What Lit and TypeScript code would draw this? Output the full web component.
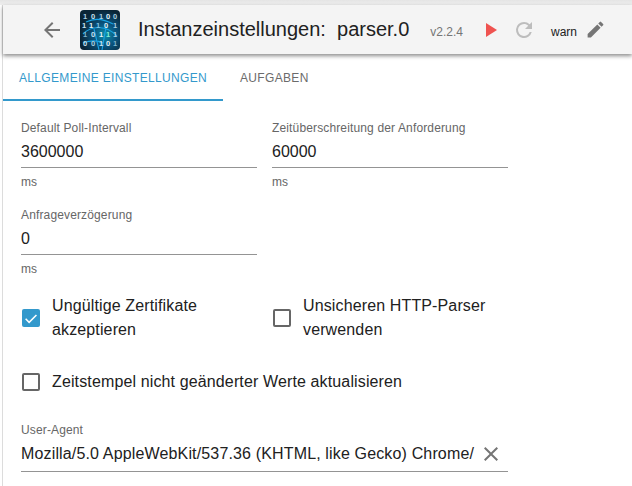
import {customElement} from "lit/decorators.js";
import {css, html, LitElement, svg} from "lit";

// rows of the binary pattern in the logo: x, y, digit, colour
const digits: [number, number, string, string][] = [
    [3, 9, "1", "#a9cfe0"], [11, 9, "0", "#c8e2ee"], [19, 9, "1", "#a9cfe0"], [26, 9, "0", "#e2f2f8"], [33, 9, "0", "#a9cfe0"],
    [2, 18, "1", "#c8e2ee"], [9, 18, "1", "#e2f2f8"], [16, 18, "1", "#7fc4e4"], [24, 18, "0", "#e2f2f8"], [33, 18, "1", "#a9cfe0"],
    [3, 27, "1", "#7fb4cc"], [11, 27, "0", "#c8e2ee"], [19, 27, "1", "#e2f2f8"], [26, 27, "1", "#7ff0d8"], [33, 27, "1", "#a9cfe0"],
    [3, 36, "0", "#c8e2ee"], [11, 36, "0", "#a9cfe0"], [19, 36, "1", "#c8e2ee"], [26, 36, "0", "#e2f2f8"], [33, 36, "1", "#7fb4cc"],
];

const logo = html`
    <svg class="logo" viewBox="0 0 40 40" width="40" height="40">
        <defs>
            <radialGradient id="glow" cx="0.62" cy="0.62" r="0.62">
                <stop offset="0" stop-color="#0e8fa8"/>
                <stop offset="0.45" stop-color="#0a5580"/>
                <stop offset="1" stop-color="#0a2536"/>
            </radialGradient>
        </defs>
        <rect width="40" height="40" rx="4" fill="url(#glow)"/>
        <path d="M3 24C12 15 26 15 37 26M6 12C14 8 24 9 33 14M14 19l5 21M26 17l-4 23M3 33c8-3 14-3 20 0" stroke="#18a4e6" stroke-width="1.1" fill="none"/>
        ${digits.map(([x, y, d, c]) => svg`<text x=${x} y=${y} fill=${c} class="digit">${d}</text>`)}
    </svg>
`;

@customElement("app-root")
export class AppRoot extends LitElement {
    static override styles = css`
        :host {
            display: block;
            height: 486px;
            overflow: hidden;
            background: #fff;
            color: #212121;
            font-family: "Liberation Sans", Arial, sans-serif;
        }

        .page {
            height: 486px;
            box-sizing: border-box;
            padding-top: 5px;
            background: linear-gradient(#e4e4e4, #f0f0f0 5px, #fff 5px);
        }

        .frame {
            height: 481px;
            margin-left: 2px;
            border-left: 1px solid #dcdcdc;
            background: #fff;
        }

        .toolbar {
            position: relative;
            display: flex;
            align-items: center;
            height: 49px;
            background: #f4f4f4;
            box-shadow: 0 2px 4px rgba(0, 0, 0, 0.45);
        }

        .back {
            display: block;
            margin-left: 37px;
            fill: #757575;
        }

        .logo {
            display: block;
            margin-left: 16px;
        }

        .digit {
            font-family: "Liberation Sans", Arial, sans-serif;
            font-size: 7.5px;
            font-weight: 700;
        }

        .title {
            margin-left: 18px;
            font-size: 20px;
            white-space: pre;
        }

        .version {
            margin-left: 21px;
            font-size: 12px;
            color: #757575;
            padding-top: 5px;
        }

        .run {
            display: block;
            margin-left: 16px;
            fill: #ef5350;
        }

        .reload {
            display: block;
            margin-left: 9px;
            fill: #bdbdbd;
        }

        .level {
            margin-left: 15px;
            font-size: 12px;
            padding-top: 5px;
        }

        .edit {
            display: block;
            margin-left: 8px;
            fill: #757575;
        }

        .tabs {
            display: flex;
            height: 47px;
        }

        .tab {
            box-sizing: border-box;
            height: 47px;
            padding-top: 17px;
            font-size: 12px;
            line-height: 15px;
            letter-spacing: 0.33px;
            color: #6b6b6b;
            text-align: center;
        }

        .tab.active {
            width: 220px;
            color: #3399cc;
            border-bottom: 2px solid #3399cc;
        }

        .tab.other {
            margin-left: 17px;
        }

        .form {
            padding: 20px 0 0 18px;
        }

        .row {
            display: flex;
            gap: 15px;
        }

        .field {
            width: 236px;
            height: 87px;
        }

        .field label {
            display: block;
            height: 14px;
            font-size: 12px;
            line-height: 14px;
            letter-spacing: 0.14px;
            color: #666;
        }

        .value {
            height: 33px;
            box-sizing: border-box;
            padding-top: 8px;
            font-size: 16px;
            line-height: 18px;
            border-bottom: 1px solid #949494;
            white-space: nowrap;
        }

        .unit {
            margin-top: 7px;
            font-size: 12px;
            line-height: 14px;
            color: #666;
        }

        .checks {
            margin-top: -1px;
        }

        .check {
            display: flex;
            align-items: center;
            gap: 12px;
            width: 235px;
            padding-left: 1px;
            font-size: 16px;
            line-height: 24px;
            letter-spacing: 0.13px;
        }

        .box {
            flex: none;
            box-sizing: border-box;
            width: 18px;
            height: 18px;
            border: 2px solid #666;
            border-radius: 2px;
        }

        .box.on {
            border: none;
            background: #3399cc;
            fill: #fff;
        }

        .box svg {
            display: block;
        }

        .wide {
            width: auto;
            margin-top: 28px;
            white-space: nowrap;
        }

        .agent {
            width: 487px;
            margin-top: 29px;
        }

        .agent .value {
            display: flex;
            align-items: flex-start;
            justify-content: space-between;
            height: 35px;
            letter-spacing: 0.15px;
        }

        .clear {
            display: block;
            margin: -3px 5px 0 0;
            fill: #757575;
        }
    `;

    private checkbox(on: boolean) {
        return html`
            <span class="box ${on ? "on" : ""}">
                ${on ? html`<svg viewBox="0 0 24 24" width="18" height="18"><path d="M9.5 16.2 5.6 12.3l-1.5 1.5 5.4 5.4L20 8.7l-1.5-1.5z"/></svg>` : ""}
            </span>
        `;
    }

    private field(label: string, value: string) {
        return html`
            <div class="field">
                <label>${label}</label>
                <div class="value">${value}</div>
                <div class="unit">ms</div>
            </div>
        `;
    }

    override render() {
        return html`
            <div class="page">
                <div class="frame">
                    <div class="toolbar">
                        <svg class="back" viewBox="0 0 24 24" width="24" height="24"><path d="M20 11H7.83l5.59-5.59L12 4l-8 8 8 8 1.41-1.41L7.83 13H20z"/></svg>
                        ${logo}
                        <span class="title">Instanzeinstellungen:  parser.0</span>
                        <span class="version">v2.2.4</span>
                        <svg class="run" viewBox="0 0 24 24" width="24" height="24"><path d="M7 5v14L18 12z"/></svg>
                        <svg class="reload" viewBox="0 0 24 24" width="24" height="24"><path d="M17.65 6.35A7.96 7.96 0 0 0 12 4a8 8 0 1 0 7.73 10h-2.08A6 6 0 1 1 12 6c1.66 0 3.14.69 4.22 1.78L13 11h7V4z"/></svg>
                        <span class="level">warn</span>
                        <svg class="edit" viewBox="0 0 24 24" width="21" height="21"><path d="M3 17.25V21h3.75L17.81 9.94l-3.75-3.75zM20.71 7.04a1 1 0 0 0 0-1.41l-2.34-2.34a1 1 0 0 0-1.41 0l-1.83 1.83 3.75 3.75z"/></svg>
                    </div>
                    <div class="tabs">
                        <div class="tab active">ALLGEMEINE EINSTELLUNGEN</div>
                        <div class="tab other">AUFGABEN</div>
                    </div>
                    <div class="form">
                        <div class="row">
                            ${this.field("Default Poll-Intervall", "3600000")}
                            ${this.field("Zeitüberschreitung der Anforderung", "60000")}
                        </div>
                        <div class="row">
                            ${this.field("Anfrageverzögerung", "0")}
                        </div>
                        <div class="row checks">
                            <div class="check">${this.checkbox(true)}<span>Ungültige Zertifikate<br>akzeptieren</span></div>
                            <div class="check">${this.checkbox(false)}<span>Unsicheren HTTP-Parser<br>verwenden</span></div>
                        </div>
                        <div class="check wide">${this.checkbox(false)}<span>Zeitstempel nicht geänderter Werte aktualisieren</span></div>
                        <div class="field agent">
                            <label>User-Agent</label>
                            <div class="value">
                                <span>Mozilla/5.0 AppleWebKit/537.36 (KHTML, like Gecko) Chrome/</span>
                                <svg class="clear" viewBox="0 0 24 24" width="24" height="24"><path d="M19 6.41 17.59 5 12 10.59 6.41 5 5 6.41 10.59 12 5 17.59 6.41 19 12 13.41 17.59 19 19 17.59 13.41 12z"/></svg>
                            </div>
                        </div>
                    </div>
                </div>
            </div>
        `;
    }
}
